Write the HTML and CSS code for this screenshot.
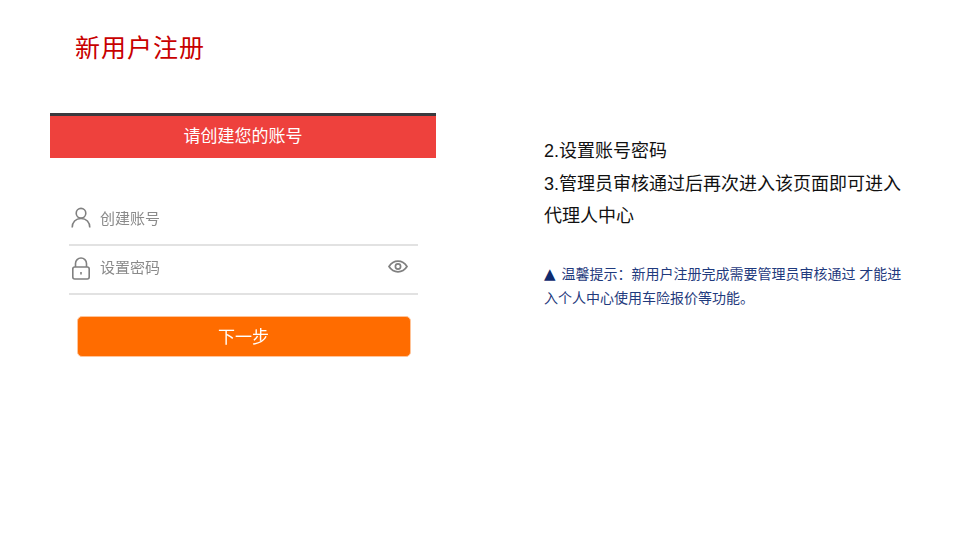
FILE: index.html
```html
<!DOCTYPE html>
<html lang="zh-CN">
<head>
    <meta charset="UTF-8">
    <meta name="viewport" content="width=device-width, initial-scale=1.0">
    <title>新用户注册</title>
    <link rel="stylesheet" href="styles.css">
</head>
<body>
    <div class="slide">
        <h1 class="title">新用户注册</h1>

        <div class="content">
            <div class="phone">
                <div class="phone-header">请创建您的账号</div>

                <div class="form">
                    <div class="field field-account">
                        <svg class="icon" width="20" height="21" viewBox="0 0 20 21" fill="none" stroke="#808080" stroke-width="1.6">
                            <circle cx="10" cy="6.2" r="4.8"/>
                            <path d="M1.2 20.500c0-5.200 3.400-9 8.800-9s8.800 3.800 8.800 9"/>
                        </svg>
                        <span class="placeholder">创建账号</span>
                    </div>
                    <div class="field field-password">
                        <svg class="icon" width="20" height="23" viewBox="0 0 20 23" fill="none" stroke="#808080" stroke-width="1.6">
                            <path d="M4.500 10V6.500a5.500 5.500 0 0 1 11 0V10"/>
                            <rect x="1.800" y="10" width="16.400" height="12" rx="2"/>
                            <path d="M10 15v2.400"/>
                        </svg>
                        <span class="placeholder">设置密码</span>
                        <svg class="eye" width="20" height="13" viewBox="0 0 20 13" fill="none" stroke="#808080" stroke-width="1.700">
                            <path d="M1 6.500C3.200 3 6.200 1.200 10 1.200s6.800 1.800 9 5.300c-2.200 3.500-5.200 5.300-9 5.300s-6.800-1.800-9-5.300z"/>
                            <circle cx="10" cy="6.500" r="2.600"/>
                        </svg>
                    </div>
                    <button class="next-button">下一步</button>
                </div>
            </div>

            <div class="info">
                <p class="steps">2.设置账号密码<br>3.管理员审核通过后再次进入该页面即可进入代理人中心</p>
                <p class="note"><span class="triangle">▲</span> 温馨提示：新用户注册完成需要管理员审核通过 才能进入个人中心使用车险报价等功能。</p>
            </div>
        </div>
    </div>
</body>
</html>
```

FILE: styles.css
```css
html, body {
    margin: 0;
    padding: 0;
    background-color: #fff;
}

body {
    font-family: "Liberation Sans", "Noto Sans CJK SC", sans-serif;
}

.slide {
    width: 960px;
    height: 540px;
    overflow: hidden;
    box-sizing: border-box;
    padding: 30px 0 0 50px;
}

.title {
    margin: 0 0 0 25px;
    font-size: 25px;
    line-height: 36px;
    font-weight: normal;
    letter-spacing: 1px;
    color: #c80000;
}

.content {
    display: flex;
    margin-top: 47px;
}

.phone {
    width: 386px;
    flex-shrink: 0;
    filter: blur(0.5px);
}

.phone-header {
    height: 42px;
    line-height: 41px;
    border-top: 3px solid #3a3a3e;
    background-color: #ee413d;
    color: #fff;
    font-size: 17px;
    text-align: center;
}

.form {
    padding: 36px 18px 0 19px;
}

.field {
    display: flex;
    align-items: center;
    box-sizing: border-box;
    border-bottom: 2px solid #e2e2e2;
    padding: 0 10px 0 2px;
}

.field-account {
    height: 51.5px;
}

.field-password {
    height: 49px;
}

.icon {
    flex-shrink: 0;
    margin-right: 9px;
}

.field-account .icon {
    margin-bottom: 3px;
}

.field-password .icon {
    margin-bottom: 2px;
}

.placeholder {
    font-size: 15px;
    color: #8a8a8a;
    margin-bottom: 3px;
}

.field-password .placeholder {
    margin-bottom: 6px;
}

.eye {
    margin-left: auto;
    margin-bottom: 6px;
}

.next-button {
    display: block;
    width: 334px;
    height: 41px;
    margin: 21px 0 0 7.5px;
    padding: 0 0 1px;
    border: 1px solid #ffc499;
    border-radius: 5px;
    background-color: #ff6c00;
    color: #fff;
    font-family: inherit;
    font-size: 17px;
}

.info {
    width: 360px;
    margin-left: 108px;
    padding-top: 22px;
}

.steps {
    margin: 0;
    font-size: 18px;
    line-height: 32.5px;
    color: #111;
}

.note {
    margin: 29px 0 0;
    font-size: 14px;
    line-height: 24px;
    color: #1f3a7d;
}

.triangle {
    font-family: "DejaVu Sans", sans-serif;
    font-size: 15px;
    margin-right: 2px;
    color: #0f2a6e;
}
```
